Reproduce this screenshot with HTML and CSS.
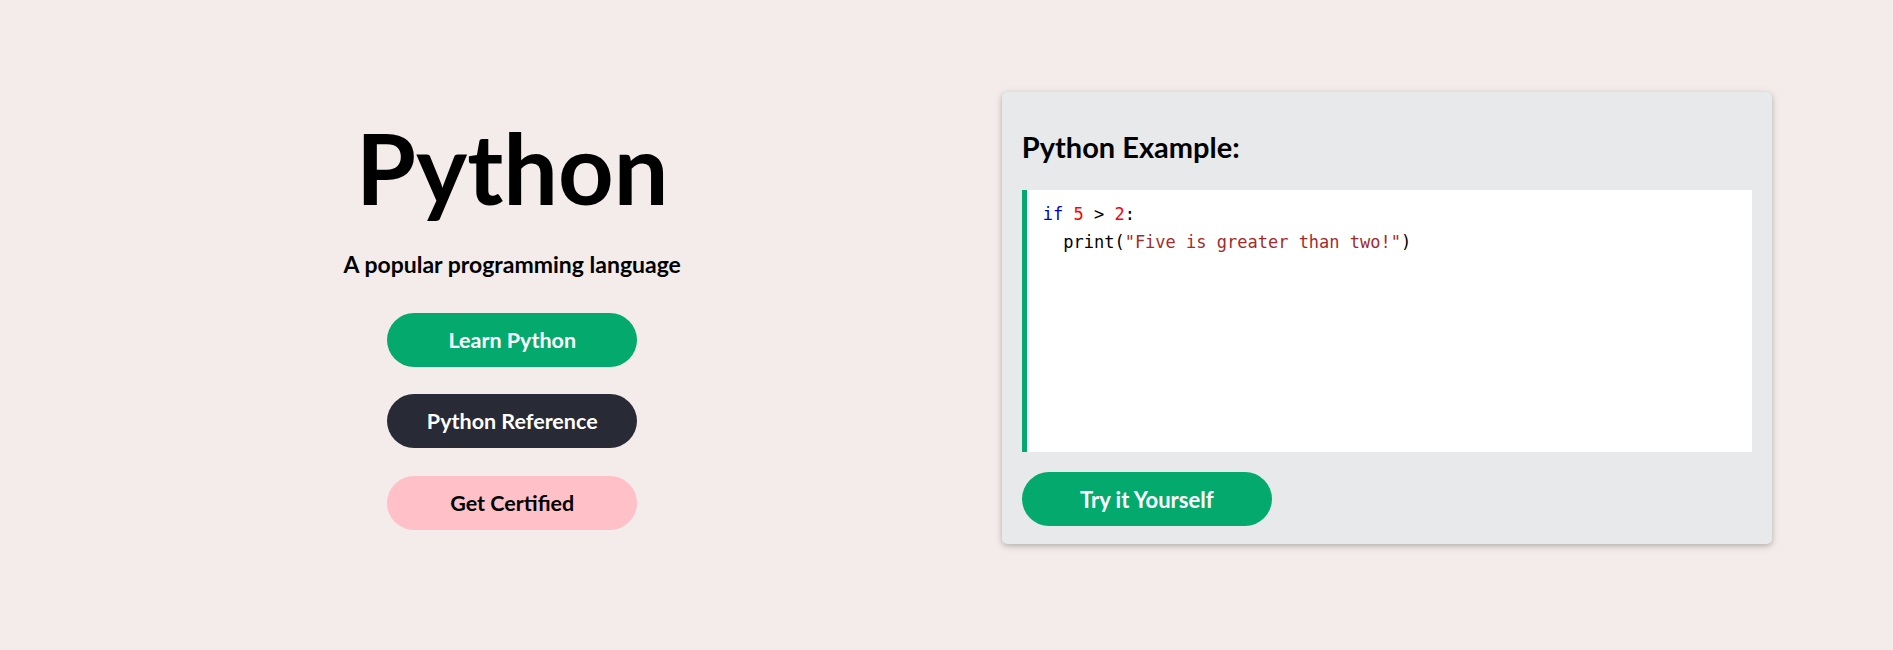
FILE: index.html
```html
<!DOCTYPE html>
<html lang="en">
<head>
<meta charset="utf-8">
<title>Python</title>
<link rel="stylesheet" href="styles.css">
</head>
<body>
<section class="hero">
  <div class="intro">
    <h1 class="title">Python</h1>
    <p class="tagline">A popular programming language</p>
    <a class="btn btn-green btn-first" href="#">Learn Python</a>
    <a class="btn btn-dark" href="#">Python Reference</a>
    <a class="btn btn-pink" href="#">Get Certified</a>
  </div>
  <div class="example-col">
    <div class="example">
      <h3 class="example-title">Python Example:</h3>
      <div class="code"><span class="kw">if</span> <span class="num">5</span> &gt; <span class="num">2</span>:<br>&nbsp;&nbsp;print(<span class="str">"Five is greater than two!"</span>)</div>
      <a class="btn btn-green btn-try" href="#">Try it Yourself</a>
    </div>
  </div>
</section>
</body>
</html>
```
FILE: styles.css
```css
html, body {
  margin: 0;
  padding: 0;
}
body {
  background: #f3ecea;
  font-family: Lato, "Noto Sans", sans-serif;
  color: #000;
  height: 650px;
  overflow: hidden;
}
.hero {
  display: flex;
  padding: 92px 69px 0 75px;
}
.intro {
  flex: 1;
  display: flex;
  flex-direction: column;
  align-items: center;
  padding-top: 20px;
}
.title {
  margin: 0;
  font-size: 97px;
  font-weight: 700;
  line-height: 112px;
}
.tagline {
  margin: 26px 0 0 0;
  font-size: 23px;
  font-weight: 700;
  line-height: 28px;
}
.btn {
  display: flex;
  align-items: center;
  justify-content: center;
  width: 250px;
  height: 54px;
  border-radius: 27px;
  text-decoration: none;
  font-size: 21.5px;
  font-weight: 700;
  color: #fff;
  box-sizing: border-box;
}
.intro .btn {
  margin-top: 27px;
}
.intro .btn-pink {
  margin-top: 28px;
}
.intro .btn-first {
  margin-top: 35px;
}
.btn-green { background: #04aa6d; }
.btn-dark { background: #282a35; }
.btn-pink { background: #ffc0c7; color: #000; }
.example-col {
  flex: 1;
  display: flex;
  justify-content: center;
}
.example {
  width: 770px;
  box-sizing: border-box;
  background: #e7e9eb;
  border-radius: 5px;
  padding: 35px 20px 18px 20px;
  box-shadow: 0 2px 5px rgba(0,0,0,0.16), 0 2px 10px rgba(0,0,0,0.12);
}
.example-title {
  margin: 0;
  font-size: 29px;
  font-weight: 700;
  line-height: 40px;
}
.code {
  margin-top: 23px;
  height: 262px;
  box-sizing: border-box;
  background: #fff;
  border-left: 5px solid #04aa6d;
  padding: 10px 16px;
  font-family: "DejaVu Sans Mono", "Liberation Mono", monospace;
  font-size: 17px;
  line-height: 28px;
  color: #000;
}
.kw { color: #0000cd; }
.num { color: #ff0000; }
.str { color: #a52a2a; }
.btn-try {
  margin-top: 20px;
  font-size: 22px;
}
```
